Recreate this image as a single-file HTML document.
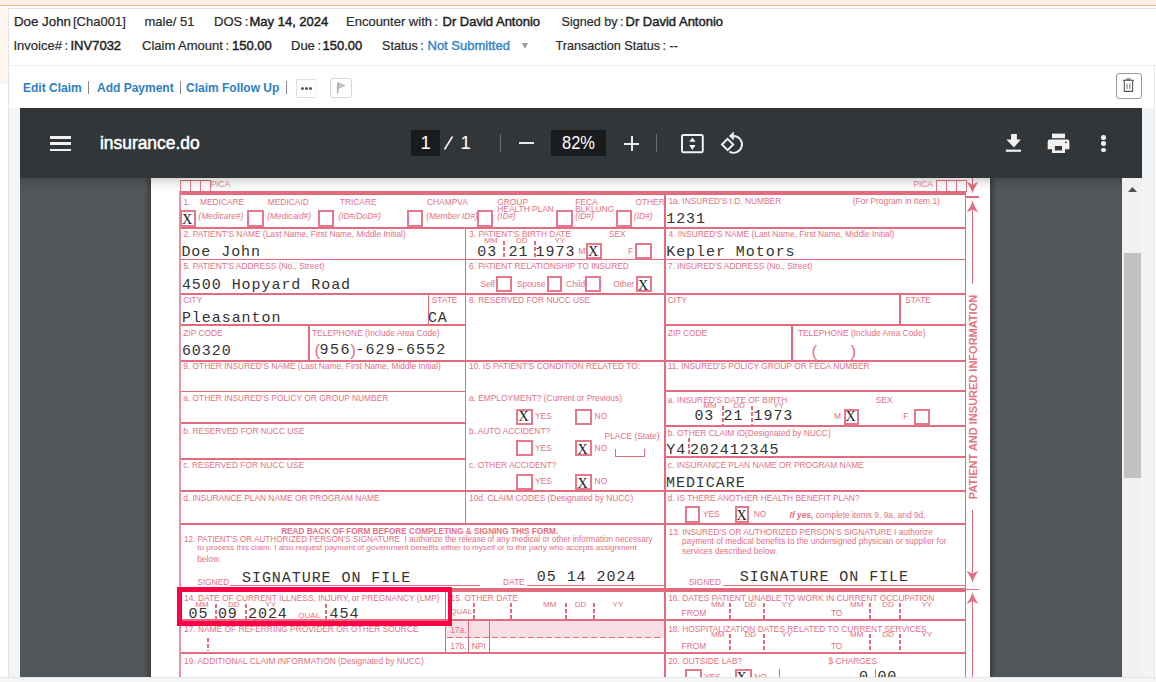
<!DOCTYPE html>
<html><head><meta charset="utf-8">
<style>
*{margin:0;padding:0;box-sizing:border-box}
html,body{width:1156px;height:682px;overflow:hidden;background:#fff;font-family:"Liberation Sans",sans-serif}
.a{position:absolute;white-space:nowrap}
#top{position:absolute;left:0;top:0;width:1156px;height:5px;background:#fdefe7}
#topline{position:absolute;left:0;top:5px;width:1156px;height:1px;background:#f8bb94}
#lefthatch{position:absolute;left:0;top:8px;width:8px;height:76px;background:#fdf6ec}
#hdr{position:absolute;left:8px;top:8px;width:1148px;height:674px;border-left:1px solid #e2e4e8;border-top:1px solid #e2e4e8}
.h1{font-size:13px;line-height:13px;color:#2a2a2a;top:15.4px;-webkit-text-stroke:0.2px #2a2a2a}
.h2{font-size:13px;line-height:13px;color:#2a2a2a;top:39.4px;-webkit-text-stroke:0.2px #2a2a2a}
.lbl{color:#333}
.h1.val{font-size:13px;top:15.4px}.val{color:#1e1e1e;-webkit-text-stroke:0.45px #1e1e1e;word-spacing:0}
#sep1{position:absolute;left:9px;top:65px;width:1147px;height:1px;background:#eceef0}
.lnk{font-size:12px;line-height:12px;color:#2e80c3;top:82px;font-weight:bold}
.pipe{position:absolute;top:81px;width:1px;height:13px;background:#888}
#lgray{position:absolute;left:9px;top:108px;width:11px;height:569px;background:#f3f4f4}
#rgray{position:absolute;left:1142px;top:108px;width:12px;height:569px;background:#f3f4f5}
#rline{position:absolute;left:1154px;top:65px;width:1px;height:612px;background:#e4e6e8}
#viewer{position:absolute;left:20px;top:108px;width:1122px;height:569px;background:#525659;overflow:hidden}
#tb{position:absolute;left:20px;top:108px;width:1122px;height:70px;background:#323639;z-index:5}
#tbsh{position:absolute;left:20px;top:178px;width:1102px;height:13px;background:linear-gradient(rgba(0,0,0,.17),rgba(0,0,0,.05) 50%,rgba(0,0,0,0));z-index:4}
#pg{position:absolute;left:151px;top:178px;width:839px;height:499px;background:#fff;overflow:hidden;box-shadow:-3px 0 4px rgba(0,0,0,.28),3px 0 4px rgba(0,0,0,.28)}
#pg i,#pg b{position:absolute;display:block}
#pg b{white-space:nowrap;font-weight:normal}
#pg .t{color:#e46f85;font-family:"Liberation Sans",sans-serif}
#pg .m{color:#333;font-family:"Liberation Mono",monospace}
#sb{position:absolute;left:1122px;top:178px;width:20px;height:499px;background:#f1f1f1}
#thumb{position:absolute;left:2px;top:75px;width:17px;height:225px;background:#c1c1c1}
#bot{position:absolute;left:0;top:677px;width:1156px;height:5px;background:#f5f6f7;border-top:1px solid #e2e4e6}
.tw{position:absolute;color:#fff;font-size:17px;line-height:17px}
</style></head><body>
<div id="top"></div><div id="topline"></div>
<div id="lefthatch"></div>
<div id="hdr"></div>
<div class="a h1" style="left:14px;font-size:13.3px;-webkit-text-stroke:0.25px #1b1b1b">Doe John</div>
<div class="a h1" style="left:73px">[Cha001]</div>
<div class="a h1" style="left:144.5px">male/ 51</div>
<div class="a h1" style="left:214px">DOS&#8201;:</div><div class="a h1 val" style="left:249.5px">May 14, 2024</div>
<div class="a h1" style="left:346px">Encounter with&#8201;:</div><div class="a h1 val" style="left:442.5px">Dr David Antonio</div>
<div class="a h1" style="left:561.5px;font-size:12.6px;top:15.8px">Signed by&#8201;:</div><div class="a h1 val" style="left:625.5px">Dr David Antonio</div>
<div class="a h2" style="left:13.5px">Invoice#&#8201;:</div><div class="a h2 val" style="left:70.5px">INV7032</div>
<div class="a h2" style="left:142px">Claim Amount&#8201;:</div><div class="a h2 val" style="left:232px">150.00</div>
<div class="a h2" style="left:291px">Due&#8201;:</div><div class="a h2 val" style="left:322.5px">150.00</div>
<div class="a h2" style="left:382px;font-size:12.6px;top:39.7px">Status&#8201;:</div><div class="a h2" style="left:427.5px;color:#3888cc;-webkit-text-stroke:0.45px #3888cc">Not Submitted</div>
<div class="a" style="left:522px;top:42.5px;width:0;height:0;border-left:3.5px solid transparent;border-right:3.5px solid transparent;border-top:6px solid #999"></div>
<div class="a h2" style="left:555.5px;font-size:12.6px;top:39.7px">Transaction Status&#8201;: --</div>
<div id="sep1"></div>
<div class="a lnk" style="left:23px">Edit Claim</div>
<div class="pipe" style="left:88px"></div>
<div class="a lnk" style="left:97px">Add Payment</div>
<div class="pipe" style="left:180px"></div>
<div class="a lnk" style="left:186px">Claim Follow Up</div>
<div class="pipe" style="left:286px"></div>
<div class="a" style="left:296px;top:79px;width:21px;height:19px;border:1px solid #ddd;border-right-color:#f4f4f4;border-radius:2px"></div>
<div class="a" style="left:301px;top:87px;width:3px;height:3px;border-radius:50%;background:#555;box-shadow:4px 0 0 #555,8px 0 0 #555"></div>
<div class="a" style="left:330px;top:78px;width:22px;height:20px;border:1px solid #d8d8d8;border-radius:3px"></div>
<div class="a" style="left:1116px;top:73px;width:26px;height:26px;border:1px solid #999;border-radius:3px"></div>
<div id="lgray"></div><div id="rgray"></div><div id="rline"></div>
<div id="viewer"></div>
<div id="pg">
<i style="left:294.0px;top:442.0px;width:220.0px;height:17.5px;background:#f8dfe6"></i>
<i style="left:29.0px;top:2.0px;width:10.5px;height:12.0px;border:1.1px solid #e3788a"></i>
<i style="left:29.0px;top:2.00px;width:10.5px;height:1px;background:#c97a5a"></i>
<i style="left:785.0px;top:2.0px;width:11.0px;height:12.0px;border:1.2px solid #e3788a"></i>
<i style="left:39.0px;top:2.0px;width:10.5px;height:12.0px;border:1.1px solid #e3788a"></i>
<i style="left:39.0px;top:2.00px;width:10.5px;height:1px;background:#c97a5a"></i>
<i style="left:795.0px;top:2.0px;width:11.0px;height:12.0px;border:1.2px solid #e3788a"></i>
<i style="left:49.0px;top:2.0px;width:10.5px;height:12.0px;border:1.1px solid #e3788a"></i>
<i style="left:49.0px;top:2.00px;width:10.5px;height:1px;background:#c97a5a"></i>
<i style="left:805.0px;top:2.0px;width:11.0px;height:12.0px;border:1.2px solid #e3788a"></i>
<b class="t" style="left:59.7px;top:1.8px;font-size:8.4px;line-height:8.4px;color:#ec7f7f">PICA</b>
<b class="t" style="left:762.4px;top:1.8px;font-size:8.4px;line-height:8.4px;color:#ec7f7f">PICA</b>
<i style="left:29.0px;top:13.25px;width:785.5px;height:3.5px;background:#e36b7e"></i>
<i style="left:29.0px;top:48.95px;width:785.5px;height:1.7px;background:#e36b7e"></i>
<i style="left:29.0px;top:80.75px;width:785.5px;height:1.7px;background:#e36b7e"></i>
<i style="left:29.0px;top:115.35px;width:785.5px;height:1.7px;background:#e36b7e"></i>
<i style="left:29.0px;top:146.25px;width:285.5px;height:1.7px;background:#e36b7e"></i>
<i style="left:514.0px;top:146.15px;width:300.5px;height:1.7px;background:#e36b7e"></i>
<i style="left:29.0px;top:181.95px;width:785.5px;height:1.7px;background:#e36b7e"></i>
<i style="left:29.0px;top:212.75px;width:285.5px;height:1.7px;background:#e36b7e"></i>
<i style="left:514.0px;top:212.35px;width:300.5px;height:1.7px;background:#e36b7e"></i>
<i style="left:29.0px;top:244.45px;width:285.5px;height:1.7px;background:#e36b7e"></i>
<i style="left:514.0px;top:247.25px;width:300.5px;height:1.7px;background:#e36b7e"></i>
<i style="left:29.0px;top:280.35px;width:285.5px;height:1.7px;background:#e36b7e"></i>
<i style="left:514.0px;top:278.25px;width:300.5px;height:1.7px;background:#e36b7e"></i>
<i style="left:29.0px;top:312.35px;width:785.5px;height:1.7px;background:#e36b7e"></i>
<i style="left:29.0px;top:345.25px;width:785.5px;height:1.7px;background:#e36b7e"></i>
<i style="left:79.0px;top:406.60px;width:250.0px;height:1.2px;background:#e36b7e"></i>
<i style="left:376.0px;top:406.90px;width:138.0px;height:1.2px;background:#e36b7e"></i>
<i style="left:571.7px;top:406.70px;width:242.8px;height:1.2px;background:#e36b7e"></i>
<i style="left:29.0px;top:410.05px;width:785.5px;height:3.5px;background:#e36b7e"></i>
<i style="left:29.0px;top:440.95px;width:785.5px;height:1.7px;background:#e36b7e"></i>
<i style="left:296.0px;top:458.75px;width:216.0px;height:1.5px;background:repeating-linear-gradient(90deg,#e36b7e 0 6px,transparent 6px 9px)"></i>
<i style="left:29.0px;top:474.05px;width:785.5px;height:1.7px;background:#e36b7e"></i>
<i style="left:28.00px;top:13.0px;width:2px;height:491.0px;background:#ea919f"></i>
<i style="left:813.70px;top:13.0px;width:1.6px;height:491.0px;background:#e36b7e"></i>
<i style="left:313.60px;top:49.0px;width:1.8px;height:297.5px;background:#e36b7e"></i>
<i style="left:513.10px;top:13.0px;width:1.8px;height:491.0px;background:#e36b7e"></i>
<i style="left:276.70px;top:116.0px;width:1.6px;height:31.0px;background:#e36b7e"></i>
<i style="left:156.80px;top:147.0px;width:1.8px;height:36.0px;background:#e36b7e"></i>
<i style="left:748.10px;top:116.0px;width:1.8px;height:31.0px;background:#e36b7e"></i>
<i style="left:639.80px;top:147.0px;width:1.8px;height:36.0px;background:#e36b7e"></i>
<i style="left:293.60px;top:413.0px;width:1.6px;height:62.0px;background:#e36b7e"></i>
<i style="left:316.70px;top:442.0px;width:1.4px;height:33.0px;background:#e36b7e"></i>
<i style="left:337.70px;top:442.0px;width:1.4px;height:33.0px;background:#e36b7e"></i>
<b class="t" style="left:32.4px;top:19.7px;font-size:8.4px;line-height:8.4px;">1.</b>
<b class="t" style="left:49.0px;top:19.7px;font-size:8.4px;line-height:8.4px;">MEDICARE</b>
<b class="t" style="left:116.8px;top:19.7px;font-size:8.4px;line-height:8.4px;">MEDICAID</b>
<b class="t" style="left:188.8px;top:19.7px;font-size:8.4px;line-height:8.4px;">TRICARE</b>
<b class="t" style="left:276.0px;top:19.7px;font-size:8.4px;line-height:8.4px;">CHAMPVA</b>
<b class="t" style="left:47.6px;top:34.3px;font-size:8.4px;line-height:8.4px;font-style:italic">(Medicare#)</b>
<b class="t" style="left:116.3px;top:34.3px;font-size:8.4px;line-height:8.4px;font-style:italic">(Medicaid#)</b>
<b class="t" style="left:187.4px;top:34.3px;font-size:8.4px;line-height:8.4px;font-style:italic">(ID#/DoD#)</b>
<b class="t" style="left:275.2px;top:34.3px;font-size:8.4px;line-height:8.4px;font-style:italic">(Member ID#)</b>
<b class="t" style="left:346.3px;top:19.6px;font-size:8.4px;line-height:8.4px;">GROUP</b>
<b class="t" style="left:346.3px;top:26.5px;font-size:8.4px;line-height:8.4px;">HEALTH PLAN</b>
<b class="t" style="left:346.3px;top:34.0px;font-size:8.4px;line-height:8.4px;font-style:italic">(ID#)</b>
<b class="t" style="left:424.2px;top:19.6px;font-size:8.4px;line-height:8.4px;">FECA</b>
<b class="t" style="left:424.2px;top:26.5px;font-size:8.4px;line-height:8.4px;">BLKLUNG</b>
<b class="t" style="left:424.2px;top:34.0px;font-size:8.4px;line-height:8.4px;font-style:italic">(ID#)</b>
<b class="t" style="left:484.4px;top:19.6px;font-size:8.4px;line-height:8.4px;">OTHER</b>
<b class="t" style="left:483.0px;top:34.0px;font-size:8.4px;line-height:8.4px;font-style:italic">(ID#)</b>
<i style="left:29.0px;top:31.8px;width:16.3px;height:17.0px;border:2px solid #e5788a"></i>
<i style="left:96.4px;top:31.8px;width:16.3px;height:17.0px;border:2px solid #e5788a"></i>
<i style="left:166.5px;top:31.8px;width:16.3px;height:17.0px;border:2px solid #e5788a"></i>
<i style="left:255.6px;top:31.8px;width:16.3px;height:17.0px;border:2px solid #e5788a"></i>
<i style="left:325.7px;top:31.8px;width:16.3px;height:17.0px;border:2px solid #e5788a"></i>
<i style="left:405.3px;top:31.8px;width:16.3px;height:17.0px;border:2px solid #e5788a"></i>
<i style="left:465.0px;top:31.8px;width:16.3px;height:17.0px;border:2px solid #e5788a"></i>
<b class="t" style="left:517.4px;top:18.8px;font-size:8.4px;line-height:8.4px;">1a. INSURED'S I.D. NUMBER</b>
<b class="t" style="left:701.8px;top:18.8px;font-size:8.4px;line-height:8.4px;">(For Program in Item 1)</b>
<b class="t" style="left:32.4px;top:52.0px;font-size:8.4px;line-height:8.4px;">2. PATIENT'S NAME (Last Name, First Name, Middle Initial)</b>
<b class="t" style="left:318.1px;top:52.0px;font-size:8.4px;line-height:8.4px;">3. PATIENT'S BIRTH DATE</b>
<b class="t" style="left:457.9px;top:52.0px;font-size:8.4px;line-height:8.4px;">SEX</b>
<b class="t" style="left:333.3px;top:58.7px;font-size:8px;line-height:8px;">MM</b>
<b class="t" style="left:364.9px;top:58.7px;font-size:8px;line-height:8px;">DD</b>
<b class="t" style="left:403.5px;top:58.7px;font-size:8px;line-height:8px;">YY</b>
<i style="left:352.45px;top:62.7px;width:1.9px;height:17.3px;background:repeating-linear-gradient(#e36b7e 0 4px,transparent 4px 6px)"></i>
<i style="left:383.05px;top:62.7px;width:1.9px;height:17.3px;background:repeating-linear-gradient(#e36b7e 0 4px,transparent 4px 6px)"></i>
<b class="t" style="left:427.6px;top:68.6px;font-size:8.4px;line-height:8.4px;">M</b>
<b class="t" style="left:476.9px;top:68.6px;font-size:8.4px;line-height:8.4px;">F</b>
<i style="left:435.0px;top:64.5px;width:16.0px;height:16.0px;border:2px solid #e5788a"></i>
<i style="left:484.0px;top:64.5px;width:16.6px;height:16.0px;border:2px solid #e5788a"></i>
<b class="t" style="left:517.4px;top:52.0px;font-size:8.4px;line-height:8.4px;">4. INSURED'S NAME (Last Name, First Name, Middle Initial)</b>
<b class="t" style="left:32.4px;top:84.0px;font-size:8.4px;line-height:8.4px;">5. PATIENT'S ADDRESS (No., Street)</b>
<b class="t" style="left:317.9px;top:84.1px;font-size:8.4px;line-height:8.4px;">6. PATIENT RELATIONSHIP TO INSURED</b>
<b class="t" style="left:329.5px;top:101.8px;font-size:8.4px;line-height:8.4px;">Self</b>
<b class="t" style="left:365.9px;top:101.8px;font-size:8.4px;line-height:8.4px;">Spouse</b>
<b class="t" style="left:415.1px;top:101.8px;font-size:8.4px;line-height:8.4px;">Child</b>
<b class="t" style="left:462.2px;top:101.8px;font-size:8.4px;line-height:8.4px;">Other</b>
<i style="left:345.3px;top:98.3px;width:15.8px;height:15.7px;border:2px solid #e5788a"></i>
<i style="left:395.5px;top:98.3px;width:15.8px;height:15.7px;border:2px solid #e5788a"></i>
<i style="left:434.3px;top:98.3px;width:15.8px;height:15.7px;border:2px solid #e5788a"></i>
<i style="left:485.2px;top:98.3px;width:15.8px;height:15.7px;border:2px solid #e5788a"></i>
<b class="t" style="left:516.8px;top:84.0px;font-size:8.4px;line-height:8.4px;">7. INSURED'S ADDRESS (No., Street)</b>
<b class="t" style="left:32.2px;top:117.8px;font-size:8.4px;line-height:8.4px;">CITY</b>
<b class="t" style="left:280.7px;top:117.8px;font-size:8.4px;line-height:8.4px;">STATE</b>
<b class="t" style="left:317.9px;top:117.7px;font-size:8.4px;line-height:8.4px;">8. RESERVED FOR NUCC USE</b>
<b class="t" style="left:516.8px;top:117.8px;font-size:8.4px;line-height:8.4px;">CITY</b>
<b class="t" style="left:754.2px;top:117.8px;font-size:8.4px;line-height:8.4px;">STATE</b>
<b class="t" style="left:32.2px;top:151.1px;font-size:8.4px;line-height:8.4px;">ZIP CODE</b>
<b class="t" style="left:161.0px;top:151.1px;font-size:8.4px;line-height:8.4px;">TELEPHONE (Include Area Code)</b>
<b class="t" style="left:516.8px;top:151.1px;font-size:8.4px;line-height:8.4px;">ZIP CODE</b>
<b class="t" style="left:646.9px;top:151.1px;font-size:8.4px;line-height:8.4px;">TELEPHONE (Include Area Code)</b>
<b class="t" style="left:163.5px;top:164.0px;font-size:17px;line-height:17px;">(</b>
<b class="t" style="left:199.3px;top:164.0px;font-size:17px;line-height:17px;">)</b>
<b class="t" style="left:660.5px;top:165.0px;font-size:17px;line-height:17px;">(</b>
<b class="t" style="left:699.5px;top:165.0px;font-size:17px;line-height:17px;">)</b>
<b class="t" style="left:32.2px;top:183.6px;font-size:8.4px;line-height:8.4px;">9. OTHER INSURED'S NAME (Last Name, First Name, Middle Initial)</b>
<b class="t" style="left:317.9px;top:183.8px;font-size:8.4px;line-height:8.4px;">10. IS PATIENT'S CONDITION RELATED TO:</b>
<b class="t" style="left:516.8px;top:183.8px;font-size:8.4px;line-height:8.4px;">11. INSURED'S POLICY GROUP OR FECA NUMBER</b>
<b class="t" style="left:32.2px;top:215.8px;font-size:8.4px;line-height:8.4px;">a. OTHER INSURED'S POLICY OR GROUP NUMBER</b>
<b class="t" style="left:317.9px;top:215.8px;font-size:8.4px;line-height:8.4px;">a. EMPLOYMENT? (Current or Previous)</b>
<i style="left:365.3px;top:230.5px;width:16.4px;height:16.0px;border:2px solid #e5788a"></i>
<i style="left:424.3px;top:230.5px;width:16.4px;height:16.0px;border:2px solid #e5788a"></i>
<b class="t" style="left:384.0px;top:234.3px;font-size:8.4px;line-height:8.4px;">YES</b>
<b class="t" style="left:443.6px;top:234.3px;font-size:8.4px;line-height:8.4px;">NO</b>
<b class="t" style="left:516.8px;top:217.8px;font-size:8.4px;line-height:8.4px;">a. INSURED'S DATE OF BIRTH</b>
<b class="t" style="left:724.8px;top:217.8px;font-size:8.4px;line-height:8.4px;">SEX</b>
<b class="t" style="left:552.3px;top:224.3px;font-size:8px;line-height:8px;">MM</b>
<b class="t" style="left:582.3px;top:224.3px;font-size:8px;line-height:8px;">DD</b>
<b class="t" style="left:622.3px;top:224.3px;font-size:8px;line-height:8px;">YY</b>
<i style="left:570.75px;top:228.0px;width:1.9px;height:18.5px;background:repeating-linear-gradient(#e36b7e 0 4px,transparent 4px 6px)"></i>
<i style="left:600.35px;top:228.0px;width:1.9px;height:18.5px;background:repeating-linear-gradient(#e36b7e 0 4px,transparent 4px 6px)"></i>
<b class="t" style="left:682.9px;top:234.3px;font-size:8.4px;line-height:8.4px;">M</b>
<b class="t" style="left:752.2px;top:234.3px;font-size:8.4px;line-height:8.4px;">F</b>
<i style="left:692.5px;top:230.7px;width:15.8px;height:16.1px;border:2px solid #e5788a"></i>
<i style="left:763.0px;top:230.5px;width:15.7px;height:16.3px;border:2px solid #e5788a"></i>
<b class="t" style="left:32.2px;top:248.6px;font-size:8.4px;line-height:8.4px;">b. RESERVED FOR NUCC USE</b>
<b class="t" style="left:317.9px;top:249.1px;font-size:8.4px;line-height:8.4px;">b. AUTO ACCIDENT?</b>
<b class="t" style="left:453.6px;top:254.1px;font-size:8.4px;line-height:8.4px;">PLACE (State)</b>
<i style="left:365.3px;top:262.4px;width:16.4px;height:16.0px;border:2px solid #e5788a"></i>
<i style="left:424.3px;top:262.4px;width:16.4px;height:16.0px;border:2px solid #e5788a"></i>
<b class="t" style="left:384.0px;top:266.3px;font-size:8.4px;line-height:8.4px;">YES</b>
<b class="t" style="left:443.6px;top:266.3px;font-size:8.4px;line-height:8.4px;">NO</b>
<i style="left:464.29999999999995px;top:270.6px;width:29.4px;height:8px;border:1.4px solid #e36b7e;border-top:none"></i>
<b class="t" style="left:516.8px;top:251.0px;font-size:8.4px;line-height:8.4px;">b. OTHER CLAIM ID(Designated by NUCC)</b>
<i style="left:536.75px;top:259.7px;width:1.9px;height:16.3px;background:repeating-linear-gradient(#e36b7e 0 4px,transparent 4px 6px)"></i>
<b class="t" style="left:32.2px;top:282.8px;font-size:8.4px;line-height:8.4px;">c. RESERVED FOR NUCC USE</b>
<b class="t" style="left:317.9px;top:282.8px;font-size:8.4px;line-height:8.4px;">c. OTHER ACCIDENT?</b>
<i style="left:365.3px;top:295.5px;width:16.4px;height:16.0px;border:2px solid #e5788a"></i>
<i style="left:424.3px;top:295.5px;width:16.4px;height:16.0px;border:2px solid #e5788a"></i>
<b class="t" style="left:384.0px;top:299.3px;font-size:8.4px;line-height:8.4px;">YES</b>
<b class="t" style="left:443.6px;top:299.3px;font-size:8.4px;line-height:8.4px;">NO</b>
<b class="t" style="left:516.8px;top:282.8px;font-size:8.4px;line-height:8.4px;">c. INSURANCE PLAN NAME OR PROGRAM NAME</b>
<b class="t" style="left:32.2px;top:315.7px;font-size:8.4px;line-height:8.4px;">d. INSURANCE PLAN NAME OR PROGRAM NAME</b>
<b class="t" style="left:317.9px;top:316.0px;font-size:8.4px;line-height:8.4px;">10d. CLAIM CODES (Designated by NUCC)</b>
<b class="t" style="left:516.8px;top:315.8px;font-size:8.4px;line-height:8.4px;">d. IS THERE ANOTHER HEALTH BENEFIT PLAN?</b>
<i style="left:533.5px;top:328.4px;width:15.8px;height:16.2px;border:2px solid #e5788a"></i>
<i style="left:583.5px;top:328.4px;width:14.9px;height:16.2px;border:2px solid #e5788a"></i>
<b class="t" style="left:551.9px;top:332.3px;font-size:8.4px;line-height:8.4px;">YES</b>
<b class="t" style="left:602.7px;top:332.3px;font-size:8.4px;line-height:8.4px;">NO</b>
<b class="t" style="left:638.6px;top:332.8px;font-size:8.4px;line-height:8.4px;"><span style="font-weight:bold;font-style:italic">If yes,</span> complete items 9, 9a, and 9d.</b>
<b class="t" style="left:130.2px;top:349.5px;font-size:8.2px;line-height:8.2px;font-weight:bold">READ BACK OF FORM BEFORE COMPLETING &amp; SIGNING THIS FORM.</b>
<b class="t" style="left:32.9px;top:358.1px;font-size:8.17px;line-height:8.17px;">12. PATIENT'S OR AUTHORIZED PERSON'S SIGNATURE&nbsp; I authorize the release of any medical or other information necessary</b>
<b class="t" style="left:46.3px;top:366.4px;font-size:8.0px;line-height:8.0px;">to process this claim. I also request payment of government benefits either to myself or to the party who accepts assignment</b>
<b class="t" style="left:46.2px;top:377.2px;font-size:8.4px;line-height:8.4px;">below.</b>
<b class="t" style="left:46.2px;top:399.6px;font-size:8.4px;line-height:8.4px;">SIGNED</b>
<b class="t" style="left:351.9px;top:399.8px;font-size:8.4px;line-height:8.4px;">DATE</b>
<b class="t" style="left:517.4px;top:350.1px;font-size:8.3px;line-height:8.3px;">13. INSURED'S OR AUTHORIZED PERSON'S SIGNATURE I authorize</b>
<b class="t" style="left:531.0px;top:359.1px;font-size:8.3px;line-height:8.3px;">payment of medical benefits to the undersigned physician or supplier for</b>
<b class="t" style="left:531.0px;top:369.1px;font-size:8.4px;line-height:8.4px;">services described below.</b>
<b class="t" style="left:537.9px;top:400.0px;font-size:8.4px;line-height:8.4px;">SIGNED</b>
<b class="t" style="left:33.0px;top:415.8px;font-size:8.4px;line-height:8.4px;">14. DATE OF CURRENT ILLNESS, INJURY, or PREGNANCY (LMP)</b>
<b class="t" style="left:44.3px;top:423.0px;font-size:8px;line-height:8px;">MM</b>
<b class="t" style="left:77.0px;top:423.0px;font-size:8px;line-height:8px;">DD</b>
<b class="t" style="left:114.3px;top:423.0px;font-size:8px;line-height:8px;">YY</b>
<i style="left:64.05px;top:425.8px;width:1.9px;height:15.2px;background:repeating-linear-gradient(#e36b7e 0 4px,transparent 4px 6px)"></i>
<i style="left:93.85px;top:425.8px;width:1.9px;height:15.2px;background:repeating-linear-gradient(#e36b7e 0 4px,transparent 4px 6px)"></i>
<b class="t" style="left:147.3px;top:433.8px;font-size:8px;line-height:8px;">QUAL.</b>
<i style="left:174.05px;top:425.8px;width:1.9px;height:15.2px;background:repeating-linear-gradient(#e36b7e 0 4px,transparent 4px 6px)"></i>
<b class="t" style="left:299.6px;top:415.8px;font-size:8.4px;line-height:8.4px;">15. OTHER DATE</b>
<b class="t" style="left:299.3px;top:429.9px;font-size:8px;line-height:8px;">QUAL.</b>
<i style="left:321.65px;top:425.0px;width:1.9px;height:17.0px;background:repeating-linear-gradient(#e36b7e 0 4px,transparent 4px 6px)"></i>
<i style="left:358.65px;top:425.0px;width:1.9px;height:17.0px;background:repeating-linear-gradient(#e36b7e 0 4px,transparent 4px 6px)"></i>
<i style="left:414.25px;top:425.0px;width:1.9px;height:17.0px;background:repeating-linear-gradient(#e36b7e 0 4px,transparent 4px 6px)"></i>
<i style="left:441.65px;top:425.0px;width:1.9px;height:17.0px;background:repeating-linear-gradient(#e36b7e 0 4px,transparent 4px 6px)"></i>
<b class="t" style="left:392.1px;top:423.0px;font-size:8px;line-height:8px;">MM</b>
<b class="t" style="left:423.8px;top:423.0px;font-size:8px;line-height:8px;">DD</b>
<b class="t" style="left:461.6px;top:423.0px;font-size:8px;line-height:8px;">YY</b>
<b class="t" style="left:517.2px;top:415.8px;font-size:8.4px;line-height:8.4px;">16. DATES PATIENT UNABLE TO WORK IN CURRENT OCCUPATION</b>
<b class="t" style="left:560.1px;top:423.0px;font-size:8px;line-height:8px;">MM</b>
<b class="t" style="left:593.5px;top:423.0px;font-size:8px;line-height:8px;">DD</b>
<b class="t" style="left:630.6px;top:423.0px;font-size:8px;line-height:8px;">YY</b>
<b class="t" style="left:699.1px;top:423.0px;font-size:8px;line-height:8px;">MM</b>
<b class="t" style="left:731.3px;top:423.0px;font-size:8px;line-height:8px;">DD</b>
<b class="t" style="left:770.5px;top:423.0px;font-size:8px;line-height:8px;">YY</b>
<b class="t" style="left:530.6px;top:430.8px;font-size:8.4px;line-height:8.4px;">FROM</b>
<b class="t" style="left:679.9px;top:430.8px;font-size:8.4px;line-height:8.4px;">TO</b>
<i style="left:578.05px;top:425.0px;width:1.9px;height:16.0px;background:repeating-linear-gradient(#e36b7e 0 4px,transparent 4px 6px)"></i>
<i style="left:611.65px;top:425.0px;width:1.9px;height:16.0px;background:repeating-linear-gradient(#e36b7e 0 4px,transparent 4px 6px)"></i>
<i style="left:718.45px;top:425.0px;width:1.9px;height:16.0px;background:repeating-linear-gradient(#e36b7e 0 4px,transparent 4px 6px)"></i>
<i style="left:747.85px;top:425.0px;width:1.9px;height:16.0px;background:repeating-linear-gradient(#e36b7e 0 4px,transparent 4px 6px)"></i>
<b class="t" style="left:560.1px;top:453.1px;font-size:8px;line-height:8px;">MM</b>
<b class="t" style="left:593.5px;top:453.1px;font-size:8px;line-height:8px;">DD</b>
<b class="t" style="left:630.6px;top:453.1px;font-size:8px;line-height:8px;">YY</b>
<b class="t" style="left:699.1px;top:453.1px;font-size:8px;line-height:8px;">MM</b>
<b class="t" style="left:731.3px;top:453.1px;font-size:8px;line-height:8px;">DD</b>
<b class="t" style="left:770.5px;top:453.1px;font-size:8px;line-height:8px;">YY</b>
<b class="t" style="left:530.6px;top:463.8px;font-size:8.4px;line-height:8.4px;">FROM</b>
<b class="t" style="left:679.9px;top:463.8px;font-size:8.4px;line-height:8.4px;">TO</b>
<i style="left:578.05px;top:456.0px;width:1.9px;height:17.0px;background:repeating-linear-gradient(#e36b7e 0 4px,transparent 4px 6px)"></i>
<i style="left:611.65px;top:456.0px;width:1.9px;height:17.0px;background:repeating-linear-gradient(#e36b7e 0 4px,transparent 4px 6px)"></i>
<i style="left:718.45px;top:456.0px;width:1.9px;height:17.0px;background:repeating-linear-gradient(#e36b7e 0 4px,transparent 4px 6px)"></i>
<i style="left:747.85px;top:456.0px;width:1.9px;height:17.0px;background:repeating-linear-gradient(#e36b7e 0 4px,transparent 4px 6px)"></i>
<b class="t" style="left:33.0px;top:447.2px;font-size:8.4px;line-height:8.4px;">17. NAME OF REFERRING PROVIDER OR OTHER SOURCE</b>
<i style="left:55.65px;top:459.7px;width:1.9px;height:13.8px;background:repeating-linear-gradient(#e36b7e 0 4px,transparent 4px 6px)"></i>
<b class="t" style="left:299.2px;top:448.3px;font-size:8.4px;line-height:8.4px;">17a.</b>
<b class="t" style="left:299.2px;top:463.8px;font-size:8.4px;line-height:8.4px;">17b.</b>
<b class="t" style="left:320.8px;top:463.8px;font-size:8.4px;line-height:8.4px;">NPI</b>
<b class="t" style="left:517.2px;top:446.6px;font-size:8.4px;line-height:8.4px;">18. HOSPITALIZATION DATES RELATED TO CURRENT SERVICES</b>
<b class="t" style="left:33.0px;top:479.3px;font-size:8.4px;line-height:8.4px;">19. ADDITIONAL CLAIM INFORMATION (Designated by NUCC)</b>
<b class="t" style="left:517.2px;top:478.6px;font-size:8.4px;line-height:8.4px;">20. OUTSIDE LAB?</b>
<b class="t" style="left:677.6px;top:478.6px;font-size:8.4px;line-height:8.4px;">$ CHARGES</b>
<i style="left:534.0px;top:491.4px;width:17.0px;height:16.6px;border:2px solid #e5788a"></i>
<i style="left:583.8px;top:491.4px;width:17.2px;height:16.6px;border:2px solid #e5788a"></i>
<i style="left:627.60px;top:491.0px;width:1.4px;height:13.0px;background:#e36b7e"></i>
<b class="t" style="left:553.2px;top:495.3px;font-size:8.4px;line-height:8.4px;">YES</b>
<b class="t" style="left:603.2px;top:495.3px;font-size:8.4px;line-height:8.4px;">NO</b>
<i style="left:723.70px;top:491.0px;width:1.6px;height:13.0px;background:#e36b7e"></i>
<i style="left:820.80px;top:0.0px;width:1.4px;height:14.0px;background:#e36b7e"></i>
<i style="left:820.80px;top:23.0px;width:1.4px;height:82.5px;background:#e36b7e"></i>
<i style="left:814.6px;top:18.30px;width:13.0px;height:1.4px;background:#e36b7e"></i>
<i style="left:820.80px;top:332.3px;width:1.4px;height:71.7px;background:#e36b7e"></i>
<i style="left:820.80px;top:415.0px;width:1.4px;height:89.0px;background:#e36b7e"></i>
<i style="left:814.6px;top:410.70px;width:13.0px;height:1.4px;background:#e36b7e"></i>
<svg style="position:absolute;left:0;top:0" width="839" height="520" fill="#e36b7e"><path d="M815.6,4.100000000000012 Q820.0,5.300000000000011 821.5,7.200000000000012 Q823.0,5.300000000000011 827.4,4.100000000000012 Q822.7,10.300000000000011 821.5,15.800000000000011 Q820.3,10.300000000000011 815.6,4.100000000000012 Z"/><path d="M815.6,34.2 Q820.0,33.0 821.5,31.1 Q823.0,33.0 827.4,34.2 Q822.7,28.0 821.5,22.5 Q820.3,28.0 815.6,34.2 Z"/><path d="M815.6,393.09999999999997 Q820.0,394.29999999999995 821.5,396.19999999999993 Q823.0,394.29999999999995 827.4,393.09999999999997 Q822.7,399.29999999999995 821.5,404.79999999999995 Q820.3,399.29999999999995 815.6,393.09999999999997 Z"/><path d="M815.6,425.7 Q820.0,424.5 821.5,422.6 Q823.0,424.5 827.4,425.7 Q822.7,419.5 821.5,414 Q820.3,419.5 815.6,425.7 Z"/></svg>
<b class="t" style="left:822.3px;top:218.5px;font-size:11px;line-height:11px;font-weight:bold;transform:translate(-50%,-50%) rotate(-90deg);color:#e57485">PATIENT AND INSURED INFORMATION</b>
<b class="m" style="left:30.9px;top:33.7px;font-size:14.2px;line-height:14.2px;letter-spacing:0px;font-family:'Liberation Serif',serif;color:#222">X</b>
<b class="m" style="left:515.2px;top:33.5px;font-size:15px;line-height:15px;letter-spacing:0.95px;">1231</b>
<b class="m" style="left:30.4px;top:66.5px;font-size:15px;line-height:15px;letter-spacing:0.95px;">Doe John</b>
<b class="m" style="left:326.3px;top:66.5px;font-size:15px;line-height:15px;letter-spacing:0.95px;">03</b>
<b class="m" style="left:357.6px;top:66.5px;font-size:15px;line-height:15px;letter-spacing:0.95px;">21</b>
<b class="m" style="left:384.6px;top:66.5px;font-size:15px;line-height:15px;letter-spacing:0.95px;">1973</b>
<b class="m" style="left:437.1px;top:66.3px;font-size:14.2px;line-height:14.2px;letter-spacing:0px;font-family:'Liberation Serif',serif;color:#222">X</b>
<b class="m" style="left:515.2px;top:66.5px;font-size:15px;line-height:15px;letter-spacing:0.95px;">Kepler Motors</b>
<b class="m" style="left:30.9px;top:99.5px;font-size:15px;line-height:15px;letter-spacing:0.95px;">4500 Hopyard Road</b>
<b class="m" style="left:487.1px;top:99.8px;font-size:14.2px;line-height:14.2px;letter-spacing:0px;font-family:'Liberation Serif',serif;color:#222">X</b>
<b class="m" style="left:30.9px;top:132.5px;font-size:15px;line-height:15px;letter-spacing:0.95px;">Pleasanton</b>
<b class="m" style="left:276.9px;top:132.5px;font-size:15px;line-height:15px;letter-spacing:0.95px;">CA</b>
<b class="m" style="left:30.9px;top:165.5px;font-size:15px;line-height:15px;letter-spacing:0.95px;">60320</b>
<b class="m" style="left:168.4px;top:165.0px;font-size:15px;line-height:15px;letter-spacing:1.6px;">956</b>
<b class="m" style="left:204.4px;top:165.0px;font-size:15px;line-height:15px;letter-spacing:1.1px;">-629-6552</b>
<b class="m" style="left:543.4px;top:231.3px;font-size:15px;line-height:15px;letter-spacing:0.95px;">03</b>
<b class="m" style="left:572.5px;top:231.3px;font-size:15px;line-height:15px;letter-spacing:0.95px;">21</b>
<b class="m" style="left:602.5px;top:231.3px;font-size:15px;line-height:15px;letter-spacing:0.95px;">1973</b>
<b class="m" style="left:694.6px;top:231.3px;font-size:14.2px;line-height:14.2px;letter-spacing:0px;font-family:'Liberation Serif',serif;color:#222">X</b>
<b class="m" style="left:367.4px;top:231.3px;font-size:14.2px;line-height:14.2px;letter-spacing:0px;font-family:'Liberation Serif',serif;color:#222">X</b>
<b class="m" style="left:426.6px;top:264.3px;font-size:14.2px;line-height:14.2px;letter-spacing:0px;font-family:'Liberation Serif',serif;color:#222">X</b>
<b class="m" style="left:426.6px;top:297.8px;font-size:14.2px;line-height:14.2px;letter-spacing:0px;font-family:'Liberation Serif',serif;color:#222">X</b>
<b class="m" style="left:515.2px;top:264.5px;font-size:15px;line-height:15px;letter-spacing:0.95px;">Y4</b>
<b class="m" style="left:538.9px;top:264.5px;font-size:15px;line-height:15px;letter-spacing:0.95px;">202412345</b>
<b class="m" style="left:515.0px;top:298.2px;font-size:15px;line-height:15px;letter-spacing:0.95px;">MEDICARE</b>
<b class="m" style="left:585.6px;top:330.3px;font-size:14.2px;line-height:14.2px;letter-spacing:0px;font-family:'Liberation Serif',serif;color:#222">X</b>
<b class="m" style="left:91.0px;top:392.5px;font-size:15px;line-height:15px;letter-spacing:0.95px;">SIGNATURE ON FILE</b>
<b class="m" style="left:385.8px;top:392.1px;font-size:15px;line-height:15px;letter-spacing:0.95px;">05 14 2024</b>
<b class="m" style="left:588.8px;top:391.8px;font-size:15px;line-height:15px;letter-spacing:0.95px;">SIGNATURE ON FILE</b>
<b class="m" style="left:37.5px;top:428.5px;font-size:15px;line-height:15px;letter-spacing:0.95px;">05</b>
<b class="m" style="left:66.9px;top:428.5px;font-size:15px;line-height:15px;letter-spacing:0.95px;">09</b>
<b class="m" style="left:97.0px;top:428.5px;font-size:15px;line-height:15px;letter-spacing:0.95px;">2024</b>
<b class="m" style="left:178.6px;top:428.5px;font-size:15px;line-height:15px;letter-spacing:0.95px;">454</b>
<b class="m" style="left:585.6px;top:492.3px;font-size:14.2px;line-height:14.2px;letter-spacing:0px;font-family:'Liberation Serif',serif;color:#222">X</b>
<b class="m" style="left:708.0px;top:491.5px;font-size:15px;line-height:15px;letter-spacing:0.95px;">0</b>
<b class="m" style="left:726.4px;top:491.5px;font-size:15px;line-height:15px;letter-spacing:0.95px;">00</b>
<i style="left:26px;top:409px;width:275px;height:39px;border:5px solid #ff0046;border-right-width:4.5px"></i>
</div>
<div id="sb"><div id="thumb"></div></div>
<div id="tb"></div><div id="tbsh"></div>
<div id="tbc" style="position:absolute;left:0;top:0;z-index:6">
<i class="a" style="left:50px;top:136px;width:21px;height:2.5px;background:#f1f1f1"></i>
<i class="a" style="left:50px;top:142.3px;width:21px;height:2.5px;background:#f1f1f1"></i>
<i class="a" style="left:50px;top:148.7px;width:21px;height:2.5px;background:#f1f1f1"></i>
<div class="tw a" style="left:99.5px;top:134.4px;font-size:18.5px;line-height:18.5px;-webkit-text-stroke:0.55px #fff;transform:scaleX(0.94);transform-origin:0 0">insurance.do</div>
<i class="a" style="left:411px;top:130px;width:29px;height:26px;background:#191b1c"></i>
<div class="tw a" style="left:420.5px;top:133.7px;font-size:18.5px;line-height:18.5px">1</div>
<svg class="a" style="left:443px;top:135px" width="11" height="16"><path d="M1.5 14.5 L9.5 1.5" stroke="#f1f1f1" stroke-width="1.6"/></svg>
<div class="tw a" style="left:460.5px;top:133.7px;font-size:18.5px;line-height:18.5px">1</div>
<i class="a" style="left:500px;top:134px;width:1px;height:18px;background:#6a6d70"></i>
<i class="a" style="left:519px;top:142px;width:15px;height:2px;background:#e8eaed"></i>
<i class="a" style="left:551px;top:130px;width:55px;height:26px;background:#191b1c"></i>
<div class="tw a" style="left:562px;top:133.7px;font-size:18.5px;line-height:18.5px;transform:scaleX(0.89);transform-origin:0 0">82%</div>
<i class="a" style="left:624px;top:142.5px;width:15px;height:2px;background:#e8eaed"></i>
<i class="a" style="left:630.5px;top:136px;width:2px;height:15px;background:#e8eaed"></i>
<i class="a" style="left:656px;top:134px;width:1px;height:18px;background:#6a6d70"></i>
<svg class="a" style="left:678px;top:131px" width="28" height="26" viewBox="0 0 28 26">
 <rect x="4" y="4" width="20.8" height="17.2" rx="1.6" fill="none" stroke="#f1f1f1" stroke-width="2"/>
 <path d="M14.4 6.6 L17.6 10.8 H11.2 Z M14.4 19.1 L17.6 13.9 H11.2 Z" fill="#f1f1f1"/>
</svg>
<svg class="a" style="left:719px;top:130px" width="26" height="26" viewBox="0 0 26 26">
 <path d="M8.6 8.9 L14.2 14.5 L8.6 20.1 L3 14.5 Z" fill="none" stroke="#f1f1f1" stroke-width="2"/>
 <path d="M14.5 6 A8.4 8.4 0 1 1 10.4 21.7" fill="none" stroke="#f1f1f1" stroke-width="1.9"/>
 <path d="M10 6.1 L14.8 1.6 L14.8 10.5 Z" fill="#f1f1f1"/>
</svg>
<svg class="a" style="left:1001px;top:130px" width="26" height="26" viewBox="0 0 26 26">
 <path d="M10.1 4 H15.9 V9.5 H19.9 L12.9 17.6 L5.4 9.5 H10.1 Z" fill="#f1f1f1"/>
 <rect x="4.8" y="19.6" width="15.2" height="2.2" fill="#f1f1f1"/>
</svg>
<svg class="a" style="left:1045px;top:130px" width="26" height="26" viewBox="0 0 26 26">
 <rect x="7" y="3.6" width="13" height="4.6" fill="#f1f1f1"/>
 <path d="M5 9.5 H22.4 A2 2 0 0 1 24.4 11.5 V19.2 H20 V23.1 H7 V19.2 H2.7 V11.5 A2 2 0 0 1 4.7 9.5 Z M9.9 16 V20.5 H17 V16 Z" fill="#f1f1f1" fill-rule="evenodd"/>
 <circle cx="20.9" cy="12.3" r="0.9" fill="#323639"/>
</svg>
<i class="a" style="left:1101px;top:135px;width:4.5px;height:4.5px;border-radius:50%;background:#f1f1f1"></i>
<i class="a" style="left:1101px;top:141.3px;width:4.5px;height:4.5px;border-radius:50%;background:#f1f1f1"></i>
<i class="a" style="left:1101px;top:147.6px;width:4.5px;height:4.5px;border-radius:50%;background:#f1f1f1"></i>
</div>
<svg class="a" style="left:1127px;top:185.5px;z-index:4" width="11" height="8"><path d="M5.5 1 L10 6 H1 Z" fill="#505050"/></svg>
<svg class="a" style="left:1116px;top:73px" width="26" height="26" viewBox="0 0 26 26">
 <path d="M6.8 7.3 H18" stroke="#555" stroke-width="1.1" fill="none"/>
 <path d="M10 6.6 Q12.4 5.2 14.8 6.6" stroke="#666" stroke-width="1.1" fill="none"/>
 <path d="M8.3 8 V18.4 H16.6 V8" stroke="#555" stroke-width="1.1" fill="none"/>
 <path d="M11 10.6 V16.2 M13.9 10.6 V16.2" stroke="#777" stroke-width="1" fill="none"/>
</svg>
<svg class="a" style="left:330px;top:78px" width="22" height="20" viewBox="0 0 22 20">
 <path d="M7.8 4.5 V15.5" stroke="#888" stroke-width="1"/>
 <path d="M8.3 4.8 L14.8 7.6 L8.3 10.4 Z" fill="#c8c8c8" stroke="#999" stroke-width="0.6"/>
</svg>
<div id="bot"></div>
</body></html>
